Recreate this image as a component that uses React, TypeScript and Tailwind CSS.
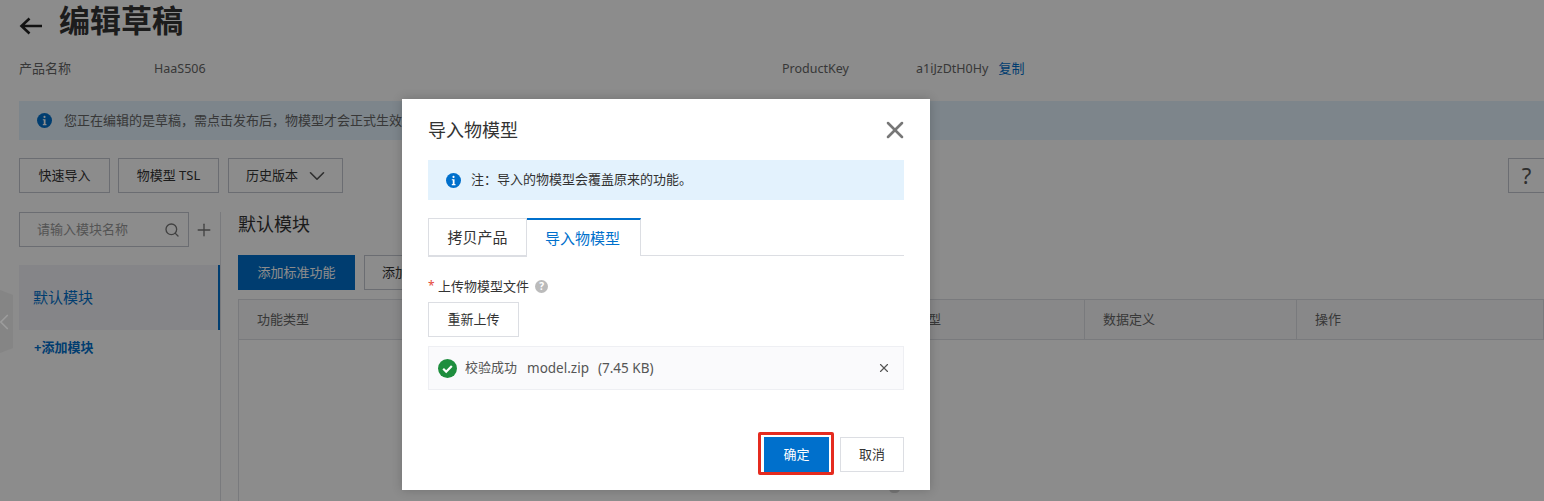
import { ChevronDown, ChevronLeft, Plus, Search, X } from 'lucide-react'

const columns = [
  { title: '功能类型', width: 'w-[210px]' },
  { title: '功能名称', width: 'w-[211px]' },
  { title: '标识符', width: 'w-[211px]' },
  { title: '数据类型', width: 'w-[214px]' },
  { title: '数据定义', width: 'w-[212px]' },
  { title: '操作', width: 'flex-1' },
]

function OutlineButton({ children, className }: { children: React.ReactNode; className: string }) {
  return (
    <button type="button" className={`flex h-[35px] items-center justify-center border border-[#c4c6cf] text-[13px] text-[#333] ${className}`}>
      {children}
    </button>
  )
}

function InfoIcon({ size }: { size: number }) {
  return (
    <svg width={size} height={size} viewBox="0 0 16 16" className="shrink-0">
      <circle cx="8" cy="8" r="8" fill="#0070cc" />
      <rect x="6.9" y="3" width="2.2" height="2.2" rx="1" fill="#fff" />
      <path d="M6.2 6.6h2.9v5.2h1v1.2H6.2v-1.2h1V7.8h-1z" fill="#fff" />
    </svg>
  )
}

function Page() {
  return (
    <div className="h-[501px] overflow-hidden bg-white pl-[19px]">
      <div className="flex h-[44px] items-center">
        <svg width="24" height="18" viewBox="0 0 24 18" className="mt-[7px] shrink-0">
          <path d="M23 9H3M10.5 1.5L2.5 9l8 7.5" fill="none" stroke="#222" strokeWidth="2.6" />
        </svg>
        <h1 className="-mt-[3px] ml-[16px] text-[31px] leading-none font-bold text-[#333]">编辑草稿</h1>
      </div>
      <div className="flex h-[50px] items-center text-[12.5px] text-[#666]">
        <span className="w-[135px] text-[13px]">产品名称</span>
        <span className="w-[628px]">HaaS506</span>
        <span className="w-[134px]">ProductKey</span>
        <span>a1iJzDtH0Hy</span>
        <span className="ml-[10px] text-[13px] text-[#0070cc]">复制</span>
      </div>
      <div className="mt-[7px] flex h-[39px] items-center gap-[12px] bg-[#e3f2fd] pl-[18px] text-[13px] text-[#666]">
        <InfoIcon size={15} />
        <span>您正在编辑的是草稿，需点击发布后，物模型才会正式生效。</span>
      </div>
      <div className="mt-[18px] flex justify-between">
        <div className="flex">
          <OutlineButton className="w-[91px]">快速导入</OutlineButton>
          <OutlineButton className="ml-[8px] w-[101px]">物模型 TSL</OutlineButton>
          <OutlineButton className="ml-[9px] w-[115px] justify-start gap-[6px] pl-[17px]">
            历史版本
            <ChevronDown size={26} strokeWidth={1.5} className="text-[#555]" />
          </OutlineButton>
        </div>
        <OutlineButton className="w-[36px] border-r-0 text-[22px] text-[#555]">?</OutlineButton>
      </div>
      <div className="mt-[19px] flex h-[289px]">
        <aside className="w-[202px] shrink-0 border-r border-[#dcdee3]">
          <div className="flex items-center">
            <div className="flex h-[35px] w-[170px] items-center justify-between border border-[#c4c6cf] pr-[8px] pl-[18px] text-[13px] text-[#999]">
              <span className="-ml-px pt-px">请输入模块名称</span>
              <Search size={16} className="text-[#777]" />
            </div>
            <Plus size={20} strokeWidth={1.6} className="ml-[5px] text-[#777]" />
          </div>
          <div className="mt-[18px] flex h-[65px] items-center border-r-2 border-[#0070cc] bg-[#f2f3f7] pb-px pl-[14px] text-[15px] text-[#0070cc]">
            默认模块
          </div>
          <div className="flex h-[36px] items-center pl-[15px] text-[13px] font-bold text-[#0070cc]">+添加模块</div>
        </aside>
        <main className="ml-[17px] flex-1">
          <h2 className="h-[24px] text-[18px] leading-[24px] text-[#333]">默认模块</h2>
          <div className="mt-[19px] flex gap-[9px]">
            <button type="button" className="h-[35px] w-[117px] bg-[#0070cc] text-[13px] text-white">添加标准功能</button>
            <OutlineButton className="w-[127px]">添加自定义功能</OutlineButton>
          </div>
          <div className="mt-[9px] h-[300px] border-l border-[#dcdee3]">
            <div className="flex h-[41px] border-y border-[#dcdee3] bg-[#f7f8fa] text-[13px] text-[#666]">
              {columns.map((col) => (
                <div key={col.title} className={`flex items-center border-r border-[#dcdee3] pt-px pl-[18px] ${col.width}`}>
                  {col.title}
                </div>
              ))}
            </div>
          </div>
        </main>
      </div>
    </div>
  )
}

function Modal() {
  return (
    <div className="absolute top-[99px] left-[402px] h-[391px] w-[528px] bg-white px-[26px] shadow-[0_0_10px_rgba(0,0,0,0.2)]">
      <div className="flex h-[61px] items-center justify-between">
        <span className="pt-[2px] text-[18px] text-[#333]">导入物模型</span>
        <X size={28} strokeWidth={2.2} className="-mr-[5px] text-[#777]" />
      </div>
      <div className="flex h-[40px] items-center gap-[10px] bg-[#e3f2fd] pl-[18px] text-[13px] text-[#333]">
        <InfoIcon size={15} />
        <span>注：导入的物模型会覆盖原来的功能。</span>
      </div>
      <div className="mt-[18px] flex h-[38px] border-b border-[#dcdee3] text-[15px]">
        <div className="flex h-[39px] w-[99px] items-center justify-center border border-[#dcdee3] text-[#333]">拷贝产品</div>
        <div className="flex h-[38px] w-[114px] items-center justify-center border-t-2 border-r border-t-[#0070cc] border-r-[#dcdee3] bg-white pr-[2px] text-[#0070cc]">
          导入物模型
        </div>
      </div>
      <div className="mt-[21px] flex h-[18px] items-center text-[13px] text-[#333]">
        <span className="w-[10px] text-[12px] text-[#e5483a]">*</span>
        <span className="pt-px">上传物模型文件</span>
        <span className="ml-[6px] flex h-[13px] w-[13px] items-center justify-center rounded-full bg-[#bbb] text-[10px] font-bold text-white">?</span>
      </div>
      <OutlineButton className="mt-[7px] w-[91px] border-[#dcdee3]">重新上传</OutlineButton>
      <div className="mt-[9px] flex h-[44px] items-center border border-[#eeeff3] bg-[#fafafc] pr-[12px] pl-[9px] text-[13px] text-[#555]">
        <svg width="19" height="19" viewBox="0 0 19 19" className="shrink-0">
          <circle cx="9.5" cy="9.5" r="9.5" fill="#1e8e3e" />
          <path d="M5.2 9.8l3 3 5.6-5.8" fill="none" stroke="#fff" strokeWidth="2.2" />
        </svg>
        <span className="ml-[8px]">校验成功</span>
        <span className="ml-[10px] text-[13.5px]">model.zip</span>
        <span className="ml-[9px] text-[13.5px]">(7.45 KB)</span>
        <X size={14} strokeWidth={2} className="ml-auto text-[#555]" />
      </div>
      <div className="mt-[42px] flex items-start justify-end">
        <div className="h-[43px] w-[76px] rounded-[2px] border-[3px] border-[#e52b1f] py-[2px] pr-[2px] pl-[3px]">
          <button type="button" className="block h-[35px] w-[65px] bg-[#0070cc] text-[13px] text-white">确定</button>
        </div>
        <div className="ml-[6px] pt-[5px]">
          <OutlineButton className="w-[64px] border-[#dcdee3]">取消</OutlineButton>
        </div>
      </div>
    </div>
  )
}

export default function App() {
  return (
    <div className="relative h-[501px] w-[1544px] overflow-hidden font-['Noto_Sans','Noto_Sans_CJK_SC',sans-serif] [text-spacing-trim:space-all]">
      <Page />
      <div className="absolute inset-0 bg-black/45" />
      <div className="absolute top-[290px] left-0 flex h-[63px] w-[13px] items-center justify-center bg-[#858585] [clip-path:polygon(0_0,100%_8%,100%_92%,0_100%)]">
        <ChevronLeft size={26} strokeWidth={1.6} className="-ml-[6px] shrink-0 text-[#9c9c9c]" />
      </div>
      <div className="absolute top-[484px] left-[889px] h-[9px] w-[11px] rounded-full bg-[#767676]" />
      <Modal />
    </div>
  )
}
